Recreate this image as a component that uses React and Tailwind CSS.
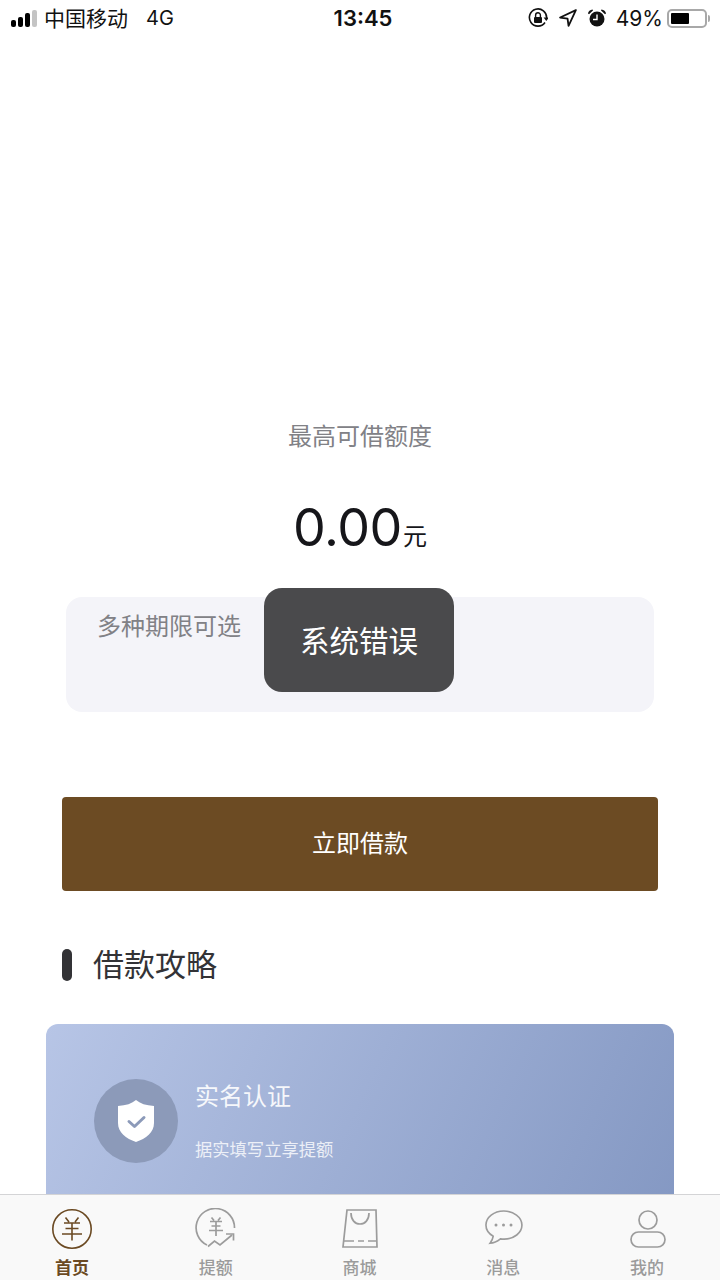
import React from "react";

const cjk = "font-['Inter','Noto_Sans_CJK_SC',sans-serif]";

const SignalBars = () => (
  <div className="flex items-end gap-[2px] h-[17px]">
    <div className="w-[5px] h-[7px] rounded-[2px] bg-black" />
    <div className="w-[5px] h-[10px] rounded-[2px] bg-black" />
    <div className="w-[5px] h-[14px] rounded-[2px] bg-black" />
    <div className="w-[5px] h-[17px] rounded-[2px] bg-[#c4c4c4]" />
  </div>
);

const RotationLock = () => (
  <svg width="20" height="20" viewBox="0 0 20 20" fill="none">
    <path d="M17 14.5A8.6 8.6 0 1 1 18.6 10" stroke="#111" strokeWidth="1.6" />
    <path d="M15.6 9.5h5.4l-2.7 3.4z" fill="#111" />
    <rect x="6" y="9" width="8" height="6" rx="1" fill="#111" />
    <path d="M7.6 9V7.2a2.4 2.4 0 0 1 4.8 0V9" stroke="#111" strokeWidth="1.4" />
  </svg>
);

const LocationArrow = () => (
  <svg width="18" height="18" viewBox="0 0 16 16" fill="none">
    <path d="M15 1 1 7.6l6.6.9.9 6.5z" stroke="#111" strokeWidth="1.6" strokeLinejoin="round" />
  </svg>
);

const Alarm = () => (
  <svg width="18" height="18" viewBox="0 0 18 18" fill="none">
    <circle cx="9" cy="10" r="7.5" fill="#111" />
    <path d="M9 5.5V10.5H5" stroke="#fff" strokeWidth="1.4" />
    <path d="M0 4.5C.3 2.200 2 .6 4.600.4L5 1.400 1 5.200zM18 4.500C17.700 2.200 16 .6 13.400.4L13 1.400l4 3.800z" fill="#111" />
  </svg>
);

const StatusBar = () => (
  <div className={`h-[36px] shrink-0 flex items-center justify-between pl-[11px] pr-[10px] text-[21px] leading-none text-[#111] ${cjk}`}>
    <div className="flex items-center w-[240px]">
      <SignalBars />
      <span className="ml-[7px]">中国移动</span>
      <span className="ml-[18px] text-[20px]">4G</span>
    </div>
    <span className="ml-[5px] font-semibold text-[22px]">13:45</span>
    <div className="flex items-center justify-end w-[240px]">
      <RotationLock />
      <div className="ml-[11px]"><LocationArrow /></div>
      <div className="ml-[11px]"><Alarm /></div>
      <span className="ml-[10px]">49%</span>
      <div className="ml-[4px] flex items-center">
        <div className="w-[40px] h-[19px] border-2 border-[#a8a8a8] rounded-[5px] p-[2px]">
          <div className="w-[18px] h-full bg-black rounded-[1px]" />
        </div>
        <div className="ml-[1px] w-[2px] h-[7px] bg-[#a8a8a8] rounded-r-full" />
      </div>
    </div>
  </div>
);

const HomeIcon = () => (
  <svg width="40" height="40" viewBox="0 0 40 40" fill="none" stroke="#6b4a23" strokeWidth="1.6">
    <circle cx="20" cy="20" r="19.2" />
    <path d="M13.5 8.5 17 13M26.5 8.5 23 13M12 14h16M13.5 19.5h13M10 25h20M20 14v17.5" />
  </svg>
);

const QuotaIcon = () => (
  <svg width="42" height="42" viewBox="0 0 42 42" fill="none" stroke="#9c9c9c" strokeWidth="1.7">
    <path d="M12 37A19.2 19.2 0 1 1 39.5 20" />
    <path d="M16.500 9.500 19 12.500M25.500 9.500 23 12.500M15 13.500h12M16.500 18h9M14 22.500h14M21 13.500V28" />
    <path d="M13 38.5 19.5 33l5.5 4 12-10" />
    <path d="M31 26h7.5v6.5" />
  </svg>
);

const ShopIcon = () => (
  <svg width="36" height="40" viewBox="0 0 36 40" fill="none" stroke="#9c9c9c" strokeWidth="1.7">
    <path d="M5 1h29l1 37H1z" />
    <path d="M9 4c0 7 4 11 9 11s9-4 9-11" />
    <path d="M2 32h10M16 32h6M26 32h8" />
  </svg>
);

const MessageIcon = () => (
  <svg width="40" height="40" viewBox="0 0 40 40" fill="none">
    <path
      d="M20 2C9.800 2 1.500 8.300 1.500 16c0 4.600 3 8.700 7.600 11.200-.4 2.800-1.700 5-3.300 7 4.200-.2 8.100-2.300 10.800-4.400 1.200.2 2.500.3 3.900.3 10.200 0 18.500-6.300 18.500-14.100S30.200 2 20 2z"
      stroke="#9c9c9c"
      strokeWidth="1.7"
      transform="translate(0.500 0) scale(0.96 1)"
    />
    <circle cx="12" cy="16" r="1.500" fill="#9c9c9c" />
    <circle cx="19.500" cy="16" r="1.500" fill="#9c9c9c" />
    <circle cx="27" cy="16" r="1.500" fill="#9c9c9c" />
  </svg>
);

const UserIcon = () => (
  <svg width="36" height="38" viewBox="0 0 36 38" fill="none" stroke="#9c9c9c" strokeWidth="1.7">
    <circle cx="18" cy="10" r="9" />
    <rect x="1" y="22" width="34" height="15" rx="7.500" />
  </svg>
);

const tabs = [
  { label: "首页", Icon: HomeIcon, active: true },
  { label: "提额", Icon: QuotaIcon },
  { label: "商城", Icon: ShopIcon },
  { label: "消息", Icon: MessageIcon },
  { label: "我的", Icon: UserIcon },
];

const TabBar = () => (
  <div className="h-[86px] shrink-0 bg-[#f9f9f9] border-t border-[#d4d4d6] flex">
    {tabs.map(({ label, Icon, active }) => (
      <div key={label} className="w-[143.8px] flex flex-col items-center">
        <div className={`h-[44px] mt-[12px] flex items-center justify-center ${active ? "" : "ml-[1px]"}`}>
          <Icon />
        </div>
        <span className={`mt-[5px] text-[17px] leading-[24px] ${active ? "text-[#6b4a23] font-bold" : "text-[#9b9b9b] font-medium"}`}>
          {label}
        </span>
      </div>
    ))}
  </div>
);

const GuideCard = () => (
  <div className="mx-[46px] h-[230px] shrink-0 rounded-t-[12px] bg-linear-115 from-[#b7c5e6] to-[#8397c2] flex items-start pl-[48px] pt-[55px]">
    <div className="w-[84px] h-[84px] rounded-full bg-[#8c9ab9] flex items-center justify-center">
      <svg width="36" height="42" viewBox="0 0 36 42">
        <path d="M18 0c4 3.500 10 5.500 18 6v17c0 9.500-8 15.500-18 19C8 38.500 0 32.500 0 23V6c8-.5 14-2.500 18-6z" fill="#fff" />
        <path d="M11 21.500l5.500 5 9.500-9" fill="none" stroke="#8c9ab9" strokeWidth="3" strokeLinecap="round" strokeLinejoin="round" />
      </svg>
    </div>
    <div className="ml-[17px] text-white">
      <div className="mt-[1px] text-[24px] leading-[34px] opacity-90">实名认证</div>
      <div className="mt-[24px] text-[17.3px] leading-[24px] opacity-80">据实填写立享提额</div>
    </div>
  </div>
);

export default function App() {
  return (
    <div className={`relative w-[720px] h-[1280px] overflow-hidden bg-white flex flex-col ${cjk}`}>
      <StatusBar />

      <div className="flex-1 min-h-0 overflow-hidden flex flex-col">
        <div className="mt-[384px] text-center text-[24px] leading-[34px] text-[#818186]">最高可借额度</div>

        <div className="mt-[39px] h-[70px] flex items-end justify-center text-[#16161a]">
          <span className="text-[52px] leading-[70px] tracking-[-0.5px]">0.00</span>
          <span className="ml-[1px] mb-[11px] text-[24px] leading-[30px]">元</span>
        </div>

        <div className="mt-[34px] mx-[66px] h-[115px] shrink-0 rounded-[16px] bg-[#f4f4f9] pl-[31px] pt-[13px] text-[24px] leading-[34px] text-[#818186]">
          多种期限可选
        </div>

        <div className="mt-[85px] mx-[62px] h-[94px] shrink-0 rounded-[4px] bg-[#6c4b23] flex items-center justify-center text-white text-[24px]">
          立即借款
        </div>

        <div className="mt-[54px] ml-[62px] flex items-center h-[40px] shrink-0">
          <div className="w-[10px] h-[32px] rounded-full bg-[#333336]" />
          <span className="ml-[21px] text-[31px] leading-[40px] text-[#333336]">借款攻略</span>
        </div>

        <div className="mt-[39px]">
          <GuideCard />
        </div>
      </div>

      <TabBar />

      {/* toast */}
      <div className="absolute left-[264px] top-[588px] w-[190px] h-[104px] rounded-[18px] bg-[#4a4a4c] text-white text-[29.5px] flex items-center justify-center pt-[3px]">
        系统错误
      </div>
    </div>
  );
}
